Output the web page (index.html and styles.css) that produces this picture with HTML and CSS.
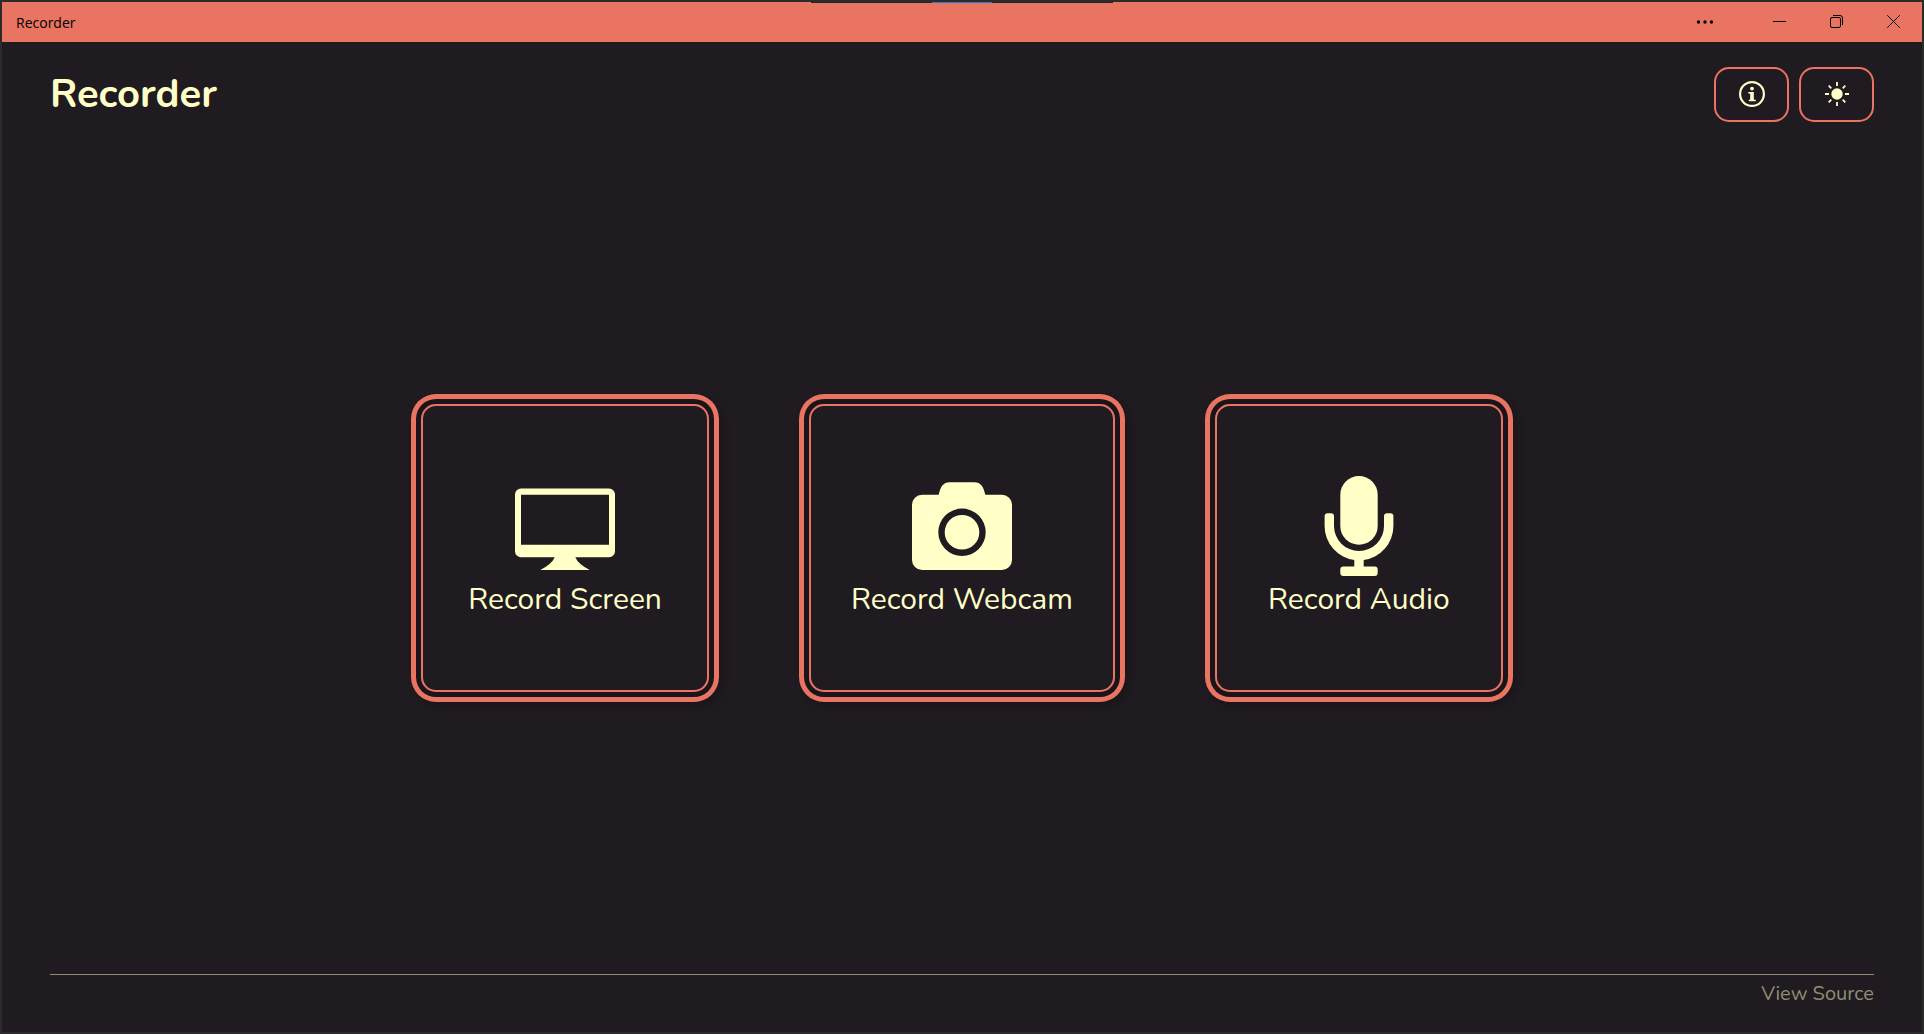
FILE: index.html
```html
<!DOCTYPE html>
<html lang="en">
<head>
  <meta charset="utf-8">
  <meta name="viewport" content="width=device-width, initial-scale=1">
  <title>Recorder</title>
  <link rel="stylesheet" href="styles.css">
</head>
<body>
  <div class="window">
    <div class="titlebar">
      <span class="titlebar-name">Recorder</span>
      <div class="titlebar-controls">
        <button class="window-button menu-button" type="button" aria-label="App menu">
          <svg width="18" height="14" viewBox="0 0 18 14"><g fill="#000"><circle cx="2.5" cy="7" r="1.7"/><circle cx="9" cy="7" r="1.7"/><circle cx="15.5" cy="7" r="1.7"/></g></svg>
        </button>
        <button class="window-button" type="button" aria-label="Minimize">
          <svg width="13" height="14" viewBox="0 0 13 14"><path d="M0 6.5h13" stroke="#000"/></svg>
        </button>
        <button class="window-button" type="button" aria-label="Restore">
          <svg width="13" height="14" viewBox="0 0 13 14" fill="none" stroke="#000"><rect x="0.5" y="2.5" width="10" height="10" rx="1.5"/><path d="M3 .5h7a2.5 2.5 0 0 1 2.500 2.500v7"/></svg>
        </button>
        <button class="window-button" type="button" aria-label="Close">
          <svg width="13" height="14" viewBox="0 0 13 14"><path d="M.3 .3l12.400 12.400M12.700 .3L.3 12.700" stroke="#000" stroke-width="1"/></svg>
        </button>
      </div>
      <div class="drag-tab"></div>
    </div>

    <div class="app">
      <header class="header">
        <h1 class="title">Recorder</h1>
        <div class="actions">
          <button class="action" type="button" aria-label="About">
            <svg width="26" height="26" viewBox="0 0 26 26"><circle cx="13" cy="13" r="11.900" fill="none" stroke="currentColor" stroke-width="2.200"/><g fill="currentColor"><circle cx="13" cy="7.600" r="1.900"/><path d="M9.300 11h5.500v7q0 .8 .8 .8h1.200v1.500h-7v-1.500h.6q.8 0 .8-.8v-4.700q0-.8-.8-.8h-1.100z"/></g></svg>
          </button>
          <button class="action" type="button" aria-label="Switch to light theme">
            <svg width="26" height="26" viewBox="0 0 26 26"><circle cx="13" cy="13" r="5.700" fill="currentColor"/><path d="M13 1v4M13 21v4M1 13h4M21 13h4M4.700 4.700l2.600 2.600M18.700 18.700l2.600 2.600M4.700 21.300l2.600-2.600M18.700 7.300l2.600-2.600" stroke="currentColor" stroke-width="1.800"/></svg>
          </button>
        </div>
      </header>

      <main class="choices">
        <button class="choice" type="button">
          <svg class="choice-icon" viewBox="0 0 100 100" fill="currentColor"><path fill-rule="evenodd" d="M6 12.500h88a6 6 0 0 1 6 6v56.800a6 6 0 0 1-6 6H60.300Q63 88 74.700 94H25.300Q37 88 39.700 81.300H6a6 6 0 0 1-6-6V18.500a6 6 0 0 1 6-6zM6 18.700v50h88v-50z"/></svg>
          <span class="choice-label">Record Screen</span>
        </button>
        <button class="choice" type="button">
          <svg class="choice-icon" viewBox="0 0 100 100" fill="currentColor"><path fill-rule="evenodd" d="M10 18.700H26.700C28.500 11 31 6.300 37.700 6.300H62.300C69 6.300 71.500 11 73.300 18.700H90a10 10 0 0 1 10 10V84a10 10 0 0 1-10 10H10a10 10 0 0 1-10-10V28.700a10 10 0 0 1 10-10zM50 32.600a23.700 23.700 0 1 0 0 47.400a23.700 23.700 0 1 0 0-47.400z"/><circle cx="50" cy="56.300" r="17.300"/></svg>
          <span class="choice-label">Record Webcam</span>
        </button>
        <button class="choice" type="button">
          <svg class="choice-icon" viewBox="0 0 100 100" fill="currentColor"><rect x="31.300" width="37.400" height="68.700" rx="18.700"/><path d="M15.600 40.300a3 3 0 0 1 3-3H22a3 3 0 0 1 3 3V50a25 25 0 0 0 50 0v-9.700a3 3 0 0 1 3-3h3.400a3 3 0 0 1 3 3V50A34.400 34.400 0 0 1 54.700 84.100V90.600H65.700a3 3 0 0 1 3 3V97a3 3 0 0 1-3 3H34.300a3 3 0 0 1-3-3V93.600a3 3 0 0 1 3-3H45.300V84.100A34.400 34.400 0 0 1 15.600 50z"/></svg>
          <span class="choice-label">Record Audio</span>
        </button>
      </main>

      <footer class="footer">
        <a class="source-link" href="#source">View Source</a>
      </footer>
    </div>
  </div>
</body>
</html>
```
FILE: styles.css
```css
:root {
  --accent: #e87461;
  --background: #201a21;
  --foreground: #ffffc7;
  --muted: #908d74;
  --frame: #2b2b2b;
  --ring: #19151b;
}

* {
  box-sizing: border-box;
}

body {
  margin: 0;
  background: var(--background);
  color: var(--foreground);
  font-family: Nunito, "Noto Sans", sans-serif;
}

button {
  margin: 0;
  padding: 0;
  border: 0;
  background: none;
  color: inherit;
  font: inherit;
  cursor: pointer;
}

svg {
  display: block;
}

.window {
  display: flex;
  flex-direction: column;
  min-height: 100vh;
  border: 2px solid var(--frame);
}

.titlebar {
  position: relative;
  display: flex;
  align-items: center;
  justify-content: space-between;
  height: 40px;
  padding-left: 14px;
  background: var(--accent);
  color: #000;
}

.titlebar-name {
  padding-top: 2px;
  font-family: "Open Sans", sans-serif;
  font-size: 14px;
  line-height: 20px;
}

.titlebar-controls {
  display: flex;
  align-self: stretch;
}

.window-button {
  display: grid;
  place-items: center;
  width: 57px;
}

.menu-button {
  margin-right: 18px;
}

/* Sliver of the collapsed toolbar at the top edge of the window */
.drag-tab {
  position: absolute;
  top: 0;
  left: 50%;
  width: 302px;
  height: 1px;
  transform: translateX(-50%);
  background: linear-gradient(#2c7bd2, #2c7bd2) center / 60px 1px no-repeat #252525;
}

.app {
  display: flex;
  flex: 1;
  flex-direction: column;
  padding: 25px 48px 0;
}

.header {
  display: flex;
  align-items: flex-start;
  justify-content: space-between;
}

.title {
  margin: 0;
  font-size: 40px;
  font-weight: 700;
  line-height: 54px;
}

.actions {
  display: flex;
  gap: 10px;
}

.action {
  display: grid;
  place-items: center;
  width: 75px;
  height: 55px;
  padding-bottom: 1px;
  border: 2px solid var(--accent);
  border-radius: 15px;
}

.choices {
  display: flex;
  flex: 1;
  flex-wrap: wrap;
  align-items: center;
  justify-content: center;
  gap: 100px;
  padding: 20px;
}

.choice {
  display: flex;
  flex-direction: column;
  align-items: center;
  justify-content: center;
  min-width: 288px;
  height: 288px;
  padding: 4px 40px 0;
  border: 2px solid var(--accent);
  border-radius: 15px;
  box-shadow:
    0 0 0 5px var(--ring),
    0 0 0 10px var(--accent),
    4px 4px 10px 10px rgba(0, 0, 0, 0.2);
}

.choice-icon {
  width: 100px;
  height: 100px;
}

.choice-label {
  font-size: 30px;
  line-height: 48px;
}

.footer {
  display: flex;
  justify-content: flex-end;
  height: 58px;
  padding-top: 4px;
  border-top: 1px solid var(--muted);
}

.source-link {
  color: var(--muted);
  font-size: 20px;
  line-height: 30px;
  text-decoration: none;
}
```
